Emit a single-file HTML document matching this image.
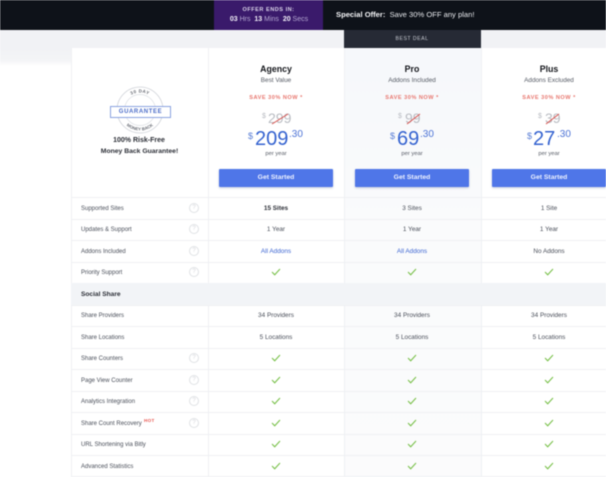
<!DOCTYPE html>
<html><head><meta charset="utf-8">
<style>
html,body{margin:0;padding:0;background:#fff}
#p{position:relative;width:606px;height:477px;overflow:hidden;background:#fff;font-family:"Liberation Sans",sans-serif;color:#3a3f4a;filter:blur(.4px)}
#p div{position:absolute;white-space:nowrap}
.c{text-align:center;transform:translateX(-50%)}
.hl{height:1px;left:71px;width:535px;background:#eff0f3}
.vl{width:1px;background:#eff0f3;top:48px;height:429px}
.l{left:81px;font-size:6px;line-height:10px;color:#4a4f5a;margin-top:.7px}
.v{font-size:6.4px;line-height:10px;color:#4a4f5a;margin-top:.7px}
.q{left:189px;width:8px;height:8px;border:1px solid #e0e2e5;border-radius:50%;font-size:6px;line-height:8px;text-align:center;color:#d4d6da}
.t{font-size:8.8px;font-weight:bold;color:#15171c;line-height:12px}
.s{font-size:6.4px;color:#555a64;line-height:10px}
.sv{font-size:5.6px;font-weight:bold;color:#e8776f;letter-spacing:.5px;line-height:9px}
.old{font-size:14px;color:#b9bcc2;line-height:16px}
.od{font-size:7px;color:#b9bcc2;line-height:9px}
.pr{font-size:20px;color:#3563d0;line-height:24px}
.ds{font-size:9px;color:#5b7fd6;line-height:12px}
.ce{font-size:10px;color:#4d73d6;line-height:12px}
.py{font-size:5.8px;color:#555a64;line-height:8px}
.b{width:114px;height:18px;background:#4f76e8;border-radius:1px;color:#eef2ff;font-size:6.8px;font-weight:bold;line-height:18px;text-align:center;box-shadow:0 1px 2px rgba(60,80,140,.3)}
svg{position:absolute}
</style></head><body><div id="p">

<div style="left:0;top:0;width:606px;height:30px;background:#0e1219"></div>
<div style="left:214px;top:0;width:109px;height:30px;background:#3a1a6b"></div>
<div class="c" style="left:268.5px;top:6px;font-size:5.6px;font-weight:bold;letter-spacing:.5px;color:#dcd6ea;line-height:9px">OFFER ENDS IN:</div>
<div class="c" style="left:269px;top:15px;font-size:7px;line-height:10px;color:#b5a8d2"><b style="color:#f2eff8">03</b> Hrs &nbsp;<b style="color:#f2eff8">13</b> Mins &nbsp;<b style="color:#f2eff8">20</b> Secs</div>
<div style="left:336px;top:9px;font-size:7.6px;line-height:12px;color:#e6e8ec"><b style="color:#f5f6f8">Special Offer:</b>&nbsp; Save 30% OFF any plan!</div>

<div style="left:0;top:30px;width:606px;height:18px;background:#f1f2f5"></div>
<div style="left:0;top:48px;width:71px;height:18px;background:linear-gradient(#f1f2f5,#f4f5f7 70%,#fff)"></div>

<div style="left:344px;top:48px;width:137px;height:429px;background:linear-gradient(#f6f8fb,#fafbfc 40%,#fbfbfc)"></div>
<div style="left:344px;top:30px;width:137px;height:18px;background:#262a35"></div>
<div class="c" style="left:412px;top:35px;font-size:5.2px;letter-spacing:.5px;color:#c9ccd3;line-height:8px">BEST DEAL</div>

<div class="vl" style="left:71px"></div>
<div class="vl" style="left:208px"></div>
<div class="vl" style="left:344px"></div>
<div class="vl" style="left:481px"></div>

<svg style="left:114.5px;top:85px" width="50" height="50" viewBox="0 0 50 50">
<defs>
<path id="a1" d="M7.5 25A17.5 17.5 0 0 1 42.5 25"/>
<path id="a2" d="M3.5 25A21.5 21.5 0 0 0 46.5 25"/>
</defs>
<circle cx="25" cy="25" r="23" fill="#fff" stroke="#cfd2d8" stroke-width=".8"/>
<circle cx="25" cy="25" r="15.5" fill="none" stroke="#dcdfe4" stroke-width=".7"/>
<text font-family="Liberation Sans" font-size="4.5" font-weight="bold" fill="#676b74" letter-spacing=".5" text-anchor="middle"><textPath href="#a1" startOffset="50%">30 DAY</textPath></text>
<text font-family="Liberation Sans" font-size="4.2" font-weight="bold" fill="#676b74" letter-spacing=".2" text-anchor="middle" dy="-1"><textPath href="#a2" startOffset="50%">MONEY BACK</textPath></text>
</svg>
<div style="left:110px;top:106px;width:59px;height:10px;border:1px solid #8aa2e0;background:#fff;text-align:center;font-size:6px;font-weight:bold;letter-spacing:.6px;color:#4a6cc8;line-height:10px">GUARANTEE</div>
<div class="c" style="left:139px;top:135px;font-size:7px;font-weight:bold;color:#2b2e36;line-height:12px">100% Risk-Free</div>
<div class="c" style="left:139.5px;top:146px;font-size:6.8px;font-weight:bold;color:#2b2e36;line-height:12px">Money Back Guarantee!</div>

<!-- Agency -->
<div class="t c" style="left:276px;top:63px">Agency</div>
<div class="s c" style="left:276px;top:75.5px">Best Value</div>
<div class="sv c" style="left:276px;top:94px">SAVE 30% NOW *</div>
<div class="od" style="left:262px;top:112px">$</div>
<div class="old" style="left:268px;top:110px">299</div>
<svg style="left:270px;top:112px" width="22" height="14"><path d="M2 12L18 2" stroke="#d9534f" stroke-width="1" fill="none"/></svg>
<div class="ds" style="left:248px;top:130px">$</div>
<div class="pr" style="left:255px;top:127px">209</div>
<div class="ce" style="left:289px;top:129px">.30</div>
<div class="py c" style="left:276px;top:150px">per year</div>
<div class="b" style="left:219px;top:169px">Get Started</div>

<!-- Pro -->
<div class="t c" style="left:412px;top:63px">Pro</div>
<div class="s c" style="left:412px;top:75.5px">Addons Included</div>
<div class="sv c" style="left:412px;top:94px">SAVE 30% NOW *</div>
<div class="od" style="left:398px;top:112px">$</div>
<div class="old" style="left:405px;top:110px">99</div>
<svg style="left:406px;top:112px" width="18" height="14"><path d="M1 12L14 2" stroke="#d9534f" stroke-width="1" fill="none"/></svg>
<div class="ds" style="left:390px;top:130px">$</div>
<div class="pr" style="left:397px;top:127px">69</div>
<div class="ce" style="left:420px;top:129px">.30</div>
<div class="py c" style="left:412px;top:150px">per year</div>
<div class="b" style="left:355px;top:169px">Get Started</div>

<!-- Plus -->
<div class="t c" style="left:549px;top:63px">Plus</div>
<div class="s c" style="left:549px;top:75.5px">Addons Excluded</div>
<div class="sv c" style="left:549px;top:94px">SAVE 30% NOW *</div>
<div class="od" style="left:538px;top:112px">$</div>
<div class="old" style="left:545px;top:110px">39</div>
<svg style="left:545px;top:112px" width="18" height="14"><path d="M1 12L14 2" stroke="#d9534f" stroke-width="1" fill="none"/></svg>
<div class="ds" style="left:527px;top:130px">$</div>
<div class="pr" style="left:533px;top:127px">27</div>
<div class="ce" style="left:557px;top:129px">.30</div>
<div class="py c" style="left:549px;top:150px">per year</div>
<div class="b" style="left:492px;top:169px;width:114px">Get Started</div>

<!-- row lines -->
<div class="hl" style="top:197px"></div>
<div class="hl" style="top:219px"></div>
<div class="hl" style="top:240px"></div>
<div class="hl" style="top:262px"></div>
<div class="hl" style="top:305px"></div>
<div class="hl" style="top:326px"></div>
<div class="hl" style="top:348px"></div>
<div class="hl" style="top:369px"></div>
<div class="hl" style="top:391px"></div>
<div class="hl" style="top:412px"></div>
<div class="hl" style="top:434px"></div>
<div class="hl" style="top:455px"></div>
<div class="hl" style="top:476px"></div>
<div style="left:71px;top:283px;width:535px;height:22px;background:#f2f4f7"></div>

<!-- labels -->
<div class="l" style="top:203px">Supported Sites</div>
<div class="l" style="top:224px">Updates &amp; Support</div>
<div class="l" style="top:246px">Addons Included</div>
<div class="l" style="top:267px">Priority Support</div>
<div class="l" style="top:289px;font-weight:bold;color:#2b2e36;font-size:6.6px">Social Share</div>
<div class="l" style="top:310px">Share Providers</div>
<div class="l" style="top:332px">Share Locations</div>
<div class="l" style="top:353px">Share Counters</div>
<div class="l" style="top:375px">Page View Counter</div>
<div class="l" style="top:396px">Analytics Integration</div>
<div class="l" style="top:418px">Share Count Recovery</div>
<div style="left:144px;top:418px;font-size:4.6px;font-weight:bold;color:#e8554f;line-height:6px;letter-spacing:.3px">HOT</div>
<div class="l" style="top:439px">URL Shortening via Bitly</div>
<div class="l" style="top:461px">Advanced Statistics</div>

<!-- help icons -->
<div class="q" style="top:203px">?</div>
<div class="q" style="top:224px">?</div>
<div class="q" style="top:246px">?</div>
<div class="q" style="top:267px">?</div>
<div class="q" style="top:353px">?</div>
<div class="q" style="top:375px">?</div>
<div class="q" style="top:396px">?</div>
<div class="q" style="top:418px">?</div>

<!-- values -->
<div class="v c" style="left:276px;top:203px;font-weight:bold;color:#2b2e36">15 Sites</div>
<div class="v c" style="left:412px;top:203px">3 Sites</div>
<div class="v c" style="left:549px;top:203px">1 Site</div>
<div class="v c" style="left:276px;top:224px">1 Year</div>
<div class="v c" style="left:412px;top:224px">1 Year</div>
<div class="v c" style="left:549px;top:224px">1 Year</div>
<div class="v c" style="left:276px;top:246px;color:#3d66d2">All Addons</div>
<div class="v c" style="left:412px;top:246px;color:#3d66d2">All Addons</div>
<div class="v c" style="left:549px;top:246px">No Addons</div>
<div class="v c" style="left:276px;top:310px">34 Providers</div>
<div class="v c" style="left:412px;top:310px">34 Providers</div>
<div class="v c" style="left:549px;top:310px">34 Providers</div>
<div class="v c" style="left:276px;top:332px">5 Locations</div>
<div class="v c" style="left:412px;top:332px">5 Locations</div>
<div class="v c" style="left:549px;top:332px">5 Locations</div>

<!-- checks -->
<svg style="left:0;top:0" width="606" height="477">
<defs><path id="k" d="M-4 0L-1.3 2.8L4 -3" fill="none" stroke="#7cc24e" stroke-width="1.1"/></defs>
<use href="#k" x="276" y="272"/><use href="#k" x="412" y="272"/><use href="#k" x="549" y="272"/>
<use href="#k" x="276" y="358"/><use href="#k" x="412" y="358"/><use href="#k" x="549" y="358"/>
<use href="#k" x="276" y="380"/><use href="#k" x="412" y="380"/><use href="#k" x="549" y="380"/>
<use href="#k" x="276" y="401"/><use href="#k" x="412" y="401"/><use href="#k" x="549" y="401"/>
<use href="#k" x="276" y="423"/><use href="#k" x="412" y="423"/><use href="#k" x="549" y="423"/>
<use href="#k" x="276" y="444"/><use href="#k" x="412" y="444"/><use href="#k" x="549" y="444"/>
<use href="#k" x="276" y="466"/><use href="#k" x="412" y="466"/><use href="#k" x="549" y="466"/>
</svg>

</div></body></html>
